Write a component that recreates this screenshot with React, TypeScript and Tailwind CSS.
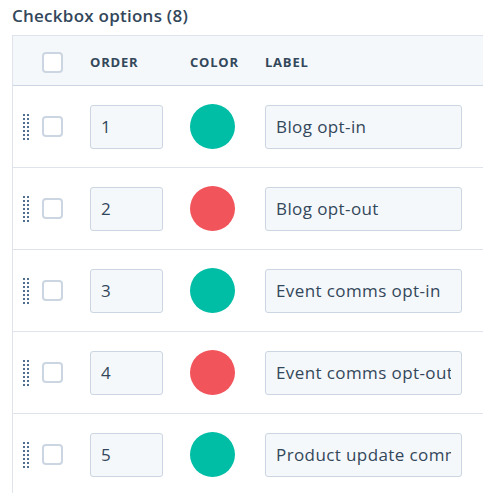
import React from "react";

const options = [
  { order: 1, color: "#00bda5", label: "Blog opt-in" },
  { order: 2, color: "#f2545b", label: "Blog opt-out" },
  { order: 3, color: "#00bda5", label: "Event comms opt-in" },
  { order: 4, color: "#f2545b", label: "Event comms opt-out" },
  { order: 5, color: "#00bda5", label: "Product update comms opt-in" },
];

const DragHandle = () => (
  <div className="grid grid-cols-2 gap-[2px] w-[6px]">
    {Array.from({ length: 14 }).map((_, i) => (
      <span key={i} className="block w-[2px] h-[2px] bg-[#516f90]" />
    ))}
  </div>
);

const Checkbox = () => (
  <div className="w-[21px] h-[21px] rounded-[4px] border-2 border-[#cbd6e2] bg-white" />
);

const App = () => {
  return (
    <div
      className="w-[483px] h-[493px] overflow-hidden bg-white text-[#33475b]"
      style={{ fontFamily: '"Open Sans", "Noto Sans", sans-serif' }}
    >
      <h2 className="pl-[12px] pt-[4px] mb-[7px] text-[17px] leading-[24px] font-semibold tracking-[0.25px]">
        Checkbox options (8)
      </h2>

      <div className="ml-[12px] w-[500px] border-l border-t border-[#dfe3eb]">
        <div className="flex items-center h-[50px] pt-[5px] bg-[#f5f8fa] border-b border-[#cbd6e2] text-[13px] font-bold tracking-[0.06em]">
          <div className="w-[29px]" />
          <div className="w-[48px] -mt-[2px]">
            <Checkbox />
          </div>
          <div className="w-[100px]">ORDER</div>
          <div className="w-[75px]">COLOR</div>
          <div>LABEL</div>
        </div>

        {options.map((opt) => (
          <div
            key={opt.order}
            className="flex items-center h-[82px] border-b border-[#dfe3eb]"
          >
            <div className="w-[29px] pl-[10px]">
              <DragHandle />
            </div>
            <div className="w-[48px]">
              <Checkbox />
            </div>
            <div className="w-[100px]">
              <input
                readOnly
                value={opt.order}
                className="w-[73px] h-[44px] px-[10px] rounded-[3px] border border-[#cbd6e2] bg-[#f5f8fa] text-[17px] outline-none"
              />
            </div>
            <div className="w-[75px]">
              <div
                className="w-[45px] h-[45px] rounded-full"
                style={{ backgroundColor: opt.color }}
              />
            </div>
            <input
              readOnly
              value={opt.label}
              className="w-[197px] h-[44px] px-[10px] rounded-[3px] border border-[#cbd6e2] bg-[#f5f8fa] text-[17px] tracking-[0.4px] outline-none"
            />
          </div>
        ))}
      </div>
    </div>
  );
};

export default App;
